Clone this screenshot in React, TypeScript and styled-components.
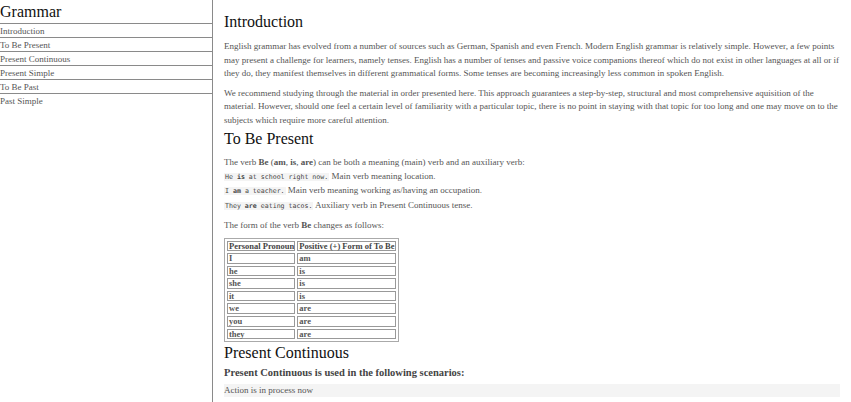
import React from "react";
import styled, { createGlobalStyle } from "styled-components";

const Global = createGlobalStyle`
  html, body { margin: 0; padding: 0; background: #fff; }
  body { font-family: "Liberation Serif", "Times New Roman", serif; overflow: hidden; }
`;

const Page = styled.div`
  display: flex;
  width: 851px;
  height: 402px;
  overflow: hidden;
`;

const Nav = styled.nav`
  width: 212px;
  flex: none;
  height: 402px;
  border-right: 1px solid #8a8a8a;
`;

const NavTitle = styled.header`
  font-size: 16px;
  line-height: 24px;
  height: 23px;
  color: #111;
`;

const NavList = styled.ul`
  list-style: none;
  margin: 0;
  padding: 0;
`;

const NavItem = styled.li`
  border-top: 1px solid #8a8a8a;
  height: 13px;
  line-height: 14px;
  font-size: 9px;
  color: #555;
`;

const Main = styled.main`
  flex: 1;
  padding: 0 11px 0 11px;
  color: #555;
  font-size: 9px;
  line-height: 13.5px;
`;

const Section = styled.section``;

const H = styled.header<{ $top: number; $bottom: number }>`
  font-size: 16px;
  color: #111;
  line-height: 20px;
  margin: ${(p) => `${p.$top}px 0 ${p.$bottom}px`};
`;

const P = styled.p`
  margin: 6px 0 0;
`;

const Code = styled.code`
  font-family: "DejaVu Sans Mono", "Liberation Mono", monospace;
  font-size: 6.6px;
  background: #f4f4f4;
  color: #444;
  padding: 0 1px;
`;

const Lines = styled.div`
  margin: 0;
`;

const Table = styled.table`
  border: 1px solid #aaa;
  border-spacing: 2px;
  font-size: 8.5px;
  line-height: 8.6px;
  color: #555;
  margin: 5px 0 0;
`;

const Th = styled.th`
  border: 1px solid #999;
  font-weight: bold;
  text-align: left;
  padding: 0 0 0 1px;
  color: #444;
`;

const Td = styled.td`
  border: 1px solid #999;
  padding: 0 0 0 1px;
  font-weight: bold;
`;

const Sub = styled.h4`
  font-size: 10.5px;
  line-height: 12px;
  font-weight: bold;
  color: #444;
  margin: 4px 0 5px;
`;

const Shade = styled.div`
  background: #f4f4f4;
  line-height: 13px;
`;

const navItems = ["Introduction", "To Be Present", "Present Continuous", "Present Simple", "To Be Past", "Past Simple"];

const rows: [string, string][] = [
  ["I", "am"],
  ["he", "is"],
  ["she", "is"],
  ["it", "is"],
  ["we", "are"],
  ["you", "are"],
  ["they", "are"],
];

export default function App() {
  return (
    <>
      <Global />
      <Page>
        <Nav>
          <NavTitle>Grammar</NavTitle>
          <NavList>
            {navItems.map((n) => (
              <NavItem key={n}>{n}</NavItem>
            ))}
          </NavList>
        </Nav>
        <Main>
          <Section>
            <H $top={12} $bottom={8}>Introduction</H>
            <P>
              English grammar has evolved from a number of sources such as German, Spanish and even French. Modern English grammar is relatively simple. However, a few points may present a challenge for learners, namely tenses. English has a number of tenses and passive voice companions thereof which do not exist in other languages at all or if they do, they manifest themselves in different grammatical forms. Some tenses are becoming increasingly less common in spoken English.
            </P>
            <P>
              We recommend studying through the material in order presented here. This approach guarantees a step-by-step, structural and most comprehensive aquisition of the material. However, should one feel a certain level of familiarity with a particular topic, there is no point in staying with that topic for too long and one may move on to the subjects which require more careful attention.
            </P>
          </Section>
          <Section>
            <H $top={2} $bottom={7}>To Be Present</H>
            <Lines>
              The verb <b>Be</b> (<b>am</b>, <b>is</b>, <b>are</b>) can be both a meaning (main) verb and an auxiliary verb:
              <br />
              <Code>He <b>is</b> at school right now.</Code> Main verb meaning location.
              <br />
              <Code>I <b>am</b> a teacher.</Code> Main verb meaning working as/having an occupation.
              <br />
              <Code>They <b>are</b> eating tacos.</Code> Auxiliary verb in Present Continuous tense.
            </Lines>
            <P>
              The form of the verb <b>Be</b> changes as follows:
            </P>
            <Table>
              <thead>
                <tr>
                  <Th>Personal Pronoun</Th>
                  <Th>Positive (+) Form of To Be</Th>
                </tr>
              </thead>
              <tbody>
                {rows.map(([a, b]) => (
                  <tr key={a}>
                    <Td>{a}</Td>
                    <Td>{b}</Td>
                  </tr>
                ))}
              </tbody>
            </Table>
          </Section>
          <Section>
            <H $top={1} $bottom={0}>Present Continuous</H>
            <Sub>Present Continuous is used in the following scenarios:</Sub>
            <Shade>Action is in process now</Shade>
          </Section>
        </Main>
      </Page>
    </>
  );
}
